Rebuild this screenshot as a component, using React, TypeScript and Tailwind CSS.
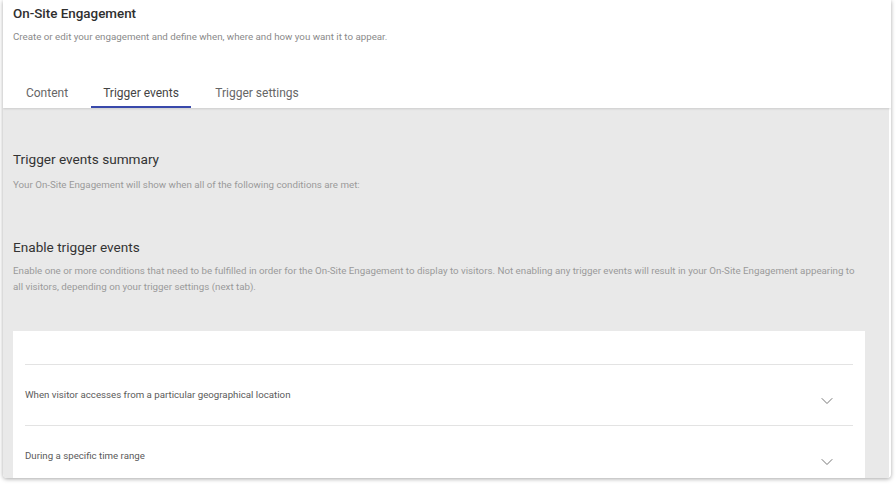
import React from 'react';
import { ChevronDown } from 'lucide-react';

const tabs = ['Content', 'Trigger events', 'Trigger settings'];

const conditions = [
  'When visitor accesses from a particular geographical location',
  'During a specific time range',
];

const App: React.FC = () => {
  return (
    <div className="w-[896px] h-[486px] bg-white overflow-hidden font-['Roboto',sans-serif]">
      <div className="ml-[3px] w-[888px] h-[478px] bg-white rounded-b-[4px] shadow-[0_1px_4px_rgba(0,0,0,0.35)] overflow-hidden flex flex-col">
        {/* header */}
        <div className="h-[108px] shrink-0 bg-white px-[10px] relative z-10 shadow-[0_1px_2px_rgba(0,0,0,0.12)] flex flex-col">
          <h1 className="text-[13.4px] font-medium text-[#2f2f2f] leading-none mt-[7px]">On-Site Engagement</h1>
          <p className="text-[9.75px] text-[#8a8a8a] leading-none mt-[12px]">
            Create or edit your engagement and define when, where and how you want it to appear.
          </p>
          <div className="flex mt-auto">
            {tabs.map((t, i) => (
              <div
                key={t}
                className={`h-[28px] flex items-center justify-center text-[12px] border-b-2 ${
                  i === 0 ? 'w-[80px] pr-[12px]' : i === 1 ? 'w-[100px] ml-[-2px]' : 'w-[108px] ml-[12px]'
                } ${i === 1 ? 'border-[#3949ab] text-[#444]' : 'border-transparent text-[#666]'}`}
              >
                {t}
              </div>
            ))}
          </div>
        </div>

        {/* body */}
        <div className="flex-1 bg-[#e9e9e9] mr-[2px] px-[10px] flex flex-col">
          <h2 className="text-[13.6px] text-[#333] leading-none mt-[45px]">Trigger events summary</h2>
          <p className="text-[9.75px] text-[#9a9a9a] leading-none mt-[13px]">
            Your On-Site Engagement will show when all of the following conditions are met:
          </p>

          <h2 className="text-[13.6px] text-[#333] leading-none mt-[52px]">Enable trigger events</h2>
          <p className="text-[9.75px] text-[#9a9a9a] leading-[16px] mt-[8px] pr-[24px]">
            Enable one or more conditions that need to be fulfilled in order for the On-Site Engagement to display to visitors. Not enabling any trigger events will result in your On-Site Engagement appearing to all visitors, depending on your trigger settings (next tab).
          </p>

          <div className="mt-[36px] mr-[14px] flex-1 bg-white px-[12px] pt-[33px]">
            {conditions.map((c) => (
              <div key={c} className="border-t border-[#e3e3e3] h-[61px] flex items-center justify-between">
                <span className="text-[9.7px] text-[#5a5a5a]">{c}</span>
                <ChevronDown size={20} strokeWidth={1.2} className="text-[#777] mr-[16px] mt-[12px]" />
              </div>
            ))}
          </div>
        </div>
      </div>
    </div>
  );
};

export default App;
